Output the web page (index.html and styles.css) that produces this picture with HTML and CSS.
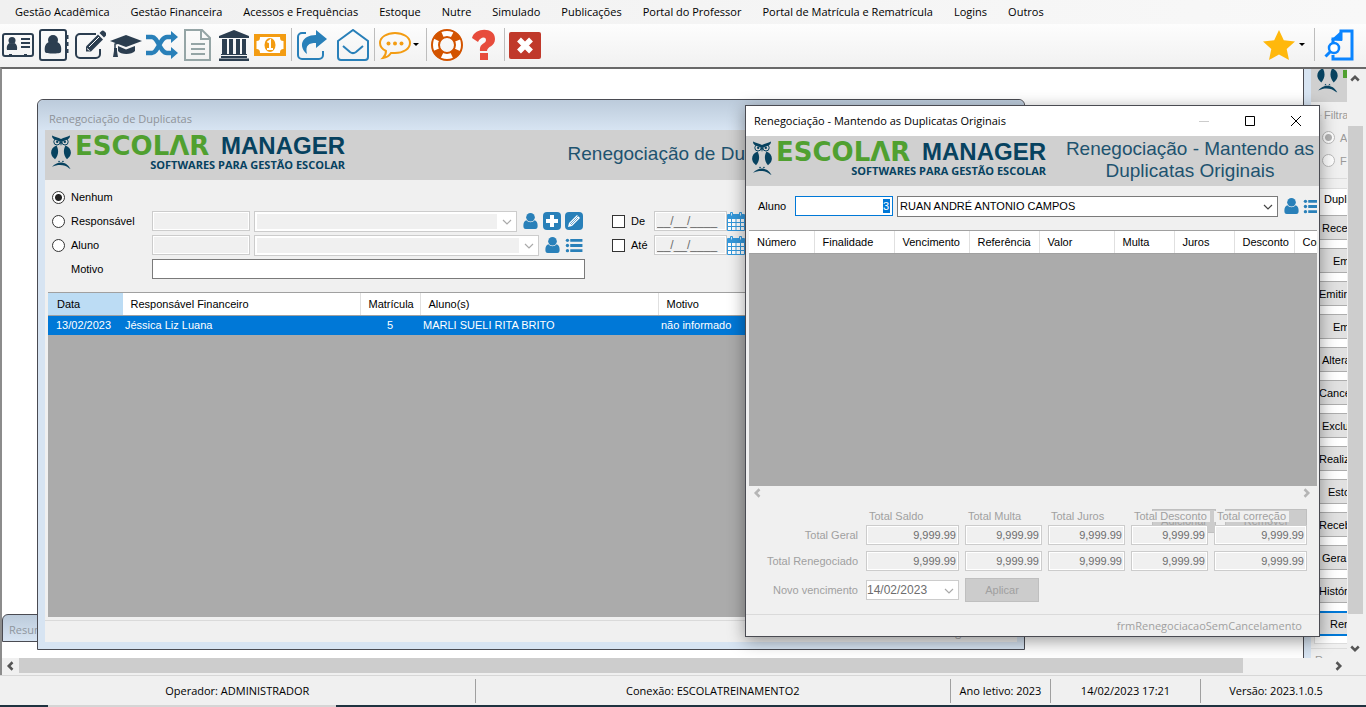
FILE: index.html
```html
<!DOCTYPE html>
<html lang="pt-BR">
<head>
<meta charset="utf-8">
<title>Escolar Manager</title>
<link rel="stylesheet" href="styles.css">
</head>
<body>
<svg class="defs" aria-hidden="true">
  <symbol id="user" viewBox="0 0 16 18"><circle cx="8" cy="5" r="4.6"/><path d="M3.6 8.2C1.3 8.8.4 11 .4 14.200c0 2 .8 3.300 2.500 3.300h10.200c1.700 0 2.500-1.300 2.500-3.300 0-3.200-.9-5.400-3.200-6C11.300 9.500 9.800 10.300 8 10.300S4.700 9.500 3.600 8.200z"/></symbol>
  <symbol id="list" viewBox="0 0 18 16"><circle cx="2" cy="2.500" r="1.800"/><circle cx="2" cy="8" r="1.800"/><circle cx="2" cy="13.500" r="1.800"/><path d="M5 1h13v3H5zM5 6.500h13v3H5zM5 12h13v3H5z"/></symbol>
  <symbol id="calendar" viewBox="0 0 18 20"><path d="M1 4h16v15H1z" fill="#fff"/><path d="M0 4a1 1 0 0 1 1-1h16a1 1 0 0 1 1 1v4H0z"/><path d="M.5 7v12.500h17V7M.5 11.500h17M.5 15.500h17M4.500 8v11M9 8v11M13.500 8v11" fill="none" stroke="currentColor"/><path d="M3.500 4V1.500h2V5h-2zM12.500 4V1.500h2V5h-2z" fill="#cfe4f4" stroke="currentColor"/></symbol>
  <symbol id="owl" viewBox="0 0 20 34"><path d="M1 0c3 2 6 1.500 9 3.500C13 1.500 16 2 19 0c0 2-.7 3-2 3.700L10 6.500 3 3.700C1.700 3 1 2 1 0zM8.800 6.500h2.400L10 10.500z"/><circle cx="6" cy="6.300" r="3.200" fill="none" stroke="currentColor" stroke-width="1"/><circle cx="14" cy="6.300" r="3.200" fill="none" stroke="currentColor" stroke-width="1"/><circle cx="6.200" cy="6.300" r="1.200"/><circle cx="13.800" cy="6.300" r="1.200"/><path d="M5.500 10C1.500 11.500-.5 15 .3 18.500c.6 2.500 2 3.500 3.700 5.200C7.700 19.500 8 14.500 5.500 10zM14.500 10c4 1.500 6 5 5.200 8.500-.6 2.500-2 3.500-3.700 5.200-3.700-4.200-4-9.200-1.500-13.700z"/><path d="M1 31.500C6 25.500 15 25 19.500 33.500L18 32.800C14 29 7 28.500 1 31.500zM7 26.500l1-1.500 1.200 1.500zM10.800 26.500 12 25l1 1.500z"/></symbol>
  <symbol id="chevron" viewBox="0 0 10 6"><path d="M1 1l4 4 4-4" fill="none" stroke="currentColor" stroke-width="1.200"/></symbol>
  <symbol id="arrow" viewBox="0 0 8 6"><path d="M1 5l3-3 3 3" fill="none" stroke="currentColor" stroke-width="2"/></symbol>
</svg>

<nav class="menubar">
  <a href="#">Gestão Acadêmica</a><a href="#">Gestão Financeira</a><a href="#">Acessos e Frequências</a><a href="#">Estoque</a><a href="#">Nutre</a><a href="#">Simulado</a><a href="#">Publicações</a><a href="#">Portal do Professor</a><a href="#">Portal de Matrícula e Rematrícula</a><a href="#">Logins</a><a href="#">Outros</a>
</nav>

<div class="toolbar">
  <button class="tool navy" aria-label="Cadastro"><svg viewBox="0 0 32 32"><rect x="1" y="5" width="30" height="22" rx="2" fill="none" stroke="currentColor" stroke-width="2"/><circle cx="10" cy="11.500" r="3.500"/><path d="M5 21c-.7-4 .7-6.500 3-7 1.300 1 2.700 1 4 0 2.300.5 3.700 3 3 7zM19 9h9v2h-9zM19 13h9v2h-9zM19 17h9v2h-9zM7 25h3v2H7zM22 25h3v2h-3z"/></svg></button>
  <button class="tool navy" aria-label="Agenda"><svg viewBox="0 0 32 32"><rect x="2" y="1" width="26" height="30" rx="2" fill="none" stroke="currentColor" stroke-width="2"/><circle cx="15" cy="11" r="5"/><path d="M7 23c-1-6 1-9 4-10 2.500 2 5.500 2 8 0 3 1 5 4 4 10-.5 2-15.500 2-16 0zM28 6h2.500v4H28zM28 13h2.500v4H28zM28 20h2.500v4H28z"/></svg></button>
  <button class="tool navy" aria-label="Editar"><svg viewBox="0 0 32 32"><path d="M22 5H6a4 4 0 0 0-4 4v16a4 4 0 0 0 4 4h16a4 4 0 0 0 4-4v-5" fill="none" stroke="currentColor" stroke-width="2"/><path d="M12 17.500 24 5.500l5 5-12 12h-5z"/><path d="m25.500 4 1.800-1.800c1-1 2.200-.8 3 0l1.500 1.500c1 1 .8 2.200 0 3L30 8.500z"/><path d="m15 18 10-10M13 19.500l2.500 2" stroke="#fff"/></svg></button>
  <button class="tool navy" aria-label="Turmas"><svg viewBox="0 0 32 32"><path d="M16 6 0 12l16 6 16-6z"/><path d="M8 17v5c2.500 4 14 4 17 0v-5l-9 3.500z"/><path d="m16 12-11 3v5" fill="none" stroke="currentColor" stroke-width="1.500"/><path d="M4 19h3v3l1 6H3l1-6z"/></svg></button>
  <button class="tool blue" aria-label="Remanejar"><svg viewBox="0 0 32 32"><path d="M0 8h6c6 0 8 16 15 16h5M0 24h6c6 0 8-16 15-16h5" fill="none" stroke="currentColor" stroke-width="4.500"/><path d="m25 2 7 6-7 6zM25 18l7 6-7 6z"/></svg></button>
  <button class="tool sage" aria-label="Documentos"><svg viewBox="0 0 32 32"><path d="M3 1h17l8 8v22H3zM19 1v9h9M9 15h14M9 20h14M9 25h14" fill="none" stroke="currentColor" stroke-width="2"/></svg></button>
  <button class="tool navy" aria-label="Banco"><svg viewBox="0 0 32 32"><path d="m16 1 15 6v2H1V7zM3 27h26v2H3zM1 29.500h30V32H1zM4 10h5v15H4zM11 10h4v15h-4zM18 10h4v15h-4zM24 10h4v15h-4zM3 25h26v1H3z"/></svg></button>
  <button class="tool orange" aria-label="Caixa"><svg viewBox="0 0 32 32"><path d="M0 5h32v22H0z"/><path d="M6 8h20c0 3 1 4 3.500 4v8c-2.500 0-3.500 1-3.500 4H6c0-3-1-4-3.500-4v-8C5 12 6 11 6 8z" fill="#fff"/><ellipse cx="16" cy="16" rx="5.500" ry="7"/><path d="m13.500 13.500 2.500-2v8M13 20h6" fill="none" stroke="#fff" stroke-width="2"/></svg></button>
  <span class="sep"></span>
  <button class="tool blue" aria-label="Exportar"><svg viewBox="0 0 32 32"><path d="M10 4H6a4 4 0 0 0-4 4v18a4 4 0 0 0 4 4h17a4 4 0 0 0 4-4v-4" fill="none" stroke="currentColor" stroke-width="2"/><path d="M20 1l11 9-11 9v-5c-7 0-11 2-9 11C2 18 5 6 20 6z"/></svg></button>
  <button class="tool blue wide" aria-label="Mensagens"><svg viewBox="0 0 32 32"><path d="M1 12 16 1l15 11v16a3 3 0 0 1-3 3H4a3 3 0 0 1-3-3zM6 17l7 6c2 1.500 4 1.500 6 0l7-6" fill="none" stroke="currentColor" stroke-width="2"/></svg></button>
  <span class="sep"></span>
  <button class="tool orange" aria-label="Conversas"><svg viewBox="0 0 32 32"><path d="M16 4c8 0 15 4 15 10s-7 10-15 10h-4c-2 3-4 4.500-8 5 2-2 3-4 3-7-4-2-6-4.500-6-8C1 8 8 4 16 4z" fill="none" stroke="currentColor" stroke-width="2"/><circle cx="9.500" cy="14.500" r="2"/><circle cx="16" cy="14.500" r="2"/><circle cx="22.500" cy="14.500" r="2"/></svg></button>
  <span class="caret"></span><span class="sep"></span>
  <button class="tool rust" aria-label="Suporte"><svg viewBox="0 0 32 32"><circle cx="16" cy="16" r="11.500" fill="none" stroke="#fff" stroke-width="7"/><circle cx="16" cy="16" r="11.500" fill="none" stroke="currentColor" stroke-width="8" stroke-dasharray="8.060 10" stroke-dashoffset="-5"/><circle cx="16" cy="16" r="15" fill="none" stroke="currentColor" stroke-width="2"/><circle cx="16" cy="16" r="8" fill="none" stroke="currentColor" stroke-width="2"/></svg></button>
  <button class="tool red" aria-label="Ajuda"><svg viewBox="0 0 32 32"><path d="M5 9c3-11 23-11 23 1 0 8-8 7-8 12h-7c-1-8 6-7 6-11 0-4-6-3-8 2zM13 24h8v7h-8z"/></svg></button>
  <span class="sep"></span>
  <button class="tool crimson" aria-label="Sair"><svg viewBox="0 0 32 32"><rect y="3" width="32" height="27" rx="2"/><path d="m10 10.500 12 12m0-12-12 12" stroke="#fff" stroke-width="5.500"/></svg></button>
  <span class="spacer"></span>
  <button class="tool gold" aria-label="Favoritos"><svg viewBox="0 0 32 32"><path d="m16 1 4.800 10.200L32 12.500l-8.300 7.600L26 31l-10-5.500L6 31l2.300-10.900L0 12.500l11.200-1.300z"/></svg></button>
  <span class="caret last"></span><span class="sep"></span>
  <button class="tool azure wide" aria-label="Pesquisar documento"><svg viewBox="0 0 32 32"><path d="M9 15V10h8V2h11v28H9v-4" fill="none" stroke="currentColor" stroke-width="3"/><path d="m7 11 11-10v11z"/><circle cx="10" cy="19" r="5" fill="#fff" stroke="currentColor" stroke-width="2.500"/><path d="m6.500 22.500-5 5" stroke="currentColor" stroke-width="3"/></svg></button>
</div>

<main class="workspace">
  <div class="desktop">
    <section class="window side-window">
      <div class="side-body">
        <div class="side-banner"><svg class="owl"><use href="#owl"/></svg><span class="green-bit"></span></div>
        <fieldset class="filter"><legend>Filtra</legend>
          <label><input type="radio" name="filtro" checked disabled>A</label>
          <label><input type="radio" name="filtro" disabled>F</label>
        </fieldset>
        <div class="side-panel">
          <h3>Dupli</h3>
          <button class="near">Receb</button><button class="far">Em</button><button class="edge">Emitir F</button><button class="far">Em</button><button class="near">Altera</button><button class="edge">Cance</button><button class="near">Exclu</button><button class="edge">Realiz</button><button class="mid">Esto</button><button class="edge">Receb</button><button class="near">Gera</button><button class="edge">Histór</button><button class="mid active">Ren</button>
        </div>
        <div class="side-foot">Resumo</div>
      </div>
    </section>

    <section class="window resumo-window">Resumo</section>

    <section class="window main-window">
      <h2 class="titlebar">Renegociação de Duplicatas</h2>
      <div class="client">
        <header class="banner">
          <div class="logo"><svg class="owl"><use href="#owl"/></svg><div class="logo-text"><div class="brand"><span class="brand-green" aria-label="ESCOLAR">ESCOLΛR</span><span>MANAGER</span></div><div class="tagline">SOFTWARES PARA GESTÃO ESCOLAR</div></div></div>
          <h1>Renegociação de Duplicatas</h1>
        </header>
        <form class="search">
          <div class="row"><label class="pick"><input type="radio" name="tipo" checked>Nenhum</label></div>
          <div class="row"><label class="pick"><input type="radio" name="tipo">Responsável</label><input class="field code" disabled aria-label="Código do responsável"><span class="combo off payer"><select disabled aria-label="Responsável"><option></option></select><svg><use href="#chevron"/></svg></span>
            <button type="button" class="icon" aria-label="Buscar"><svg class="person"><use href="#user"/></svg></button>
            <button type="button" class="icon tile" aria-label="Adicionar"><svg viewBox="0 0 18 18"><path d="M9 3v12M3 9h12" stroke="#fff" stroke-width="4"/></svg></button>
            <button type="button" class="icon tile" aria-label="Editar"><svg viewBox="0 0 18 18"><path d="m3 15 1-4 8-8 3 3-8 8z" fill="#fff"/><path d="m5 12 8-8M6 13l7-7" stroke="#2980b9" stroke-width=".7"/></svg></button>
            <label class="check"><input type="checkbox">De</label><input class="field date" value="__/__/____" disabled aria-label="Data inicial"><svg class="cal"><use href="#calendar"/></svg></div>
          <div class="row"><label class="pick"><input type="radio" name="tipo">Aluno</label><input class="field code" disabled aria-label="Código do aluno"><span class="combo off student"><select disabled aria-label="Aluno"><option></option></select><svg><use href="#chevron"/></svg></span>
            <button type="button" class="icon" aria-label="Buscar"><svg class="person"><use href="#user"/></svg></button>
            <button type="button" class="icon" aria-label="Lista"><svg class="lines"><use href="#list"/></svg></button>
            <label class="check"><input type="checkbox">Até</label><input class="field date" value="__/__/____" disabled aria-label="Data final"><svg class="cal"><use href="#calendar"/></svg></div>
          <div class="row"><label class="pick motive" for="motivo">Motivo</label><input class="field on reason" id="motivo"></div>
        </form>
        <div class="grid-box">
          <table class="debts">
            <colgroup><col class="c-date"><col class="c-payer"><col class="c-id"><col class="c-student"><col></colgroup>
            <thead><tr><th class="sorted">Data</th><th>Responsável Financeiro</th><th>Matrícula</th><th>Aluno(s)</th><th>Motivo</th></tr></thead>
            <tbody><tr><td class="day">13/02/2023</td><td>Jéssica Liz Luana</td><td class="mid-cell">5</td><td>MARLI SUELI RITA BRITO</td><td>não informado</td></tr></tbody>
          </table>
        </div>
        <footer class="form-name">frmRenegociacao</footer>
      </div>
    </section>

    <section class="window modal" role="dialog" aria-label="Renegociação">
      <div class="modal-title"><h2>Renegociação - Mantendo as Duplicatas Originais</h2>
        <button class="min" aria-label="Minimizar"><svg viewBox="0 0 12 12"><path d="M1 6.500h10" stroke="currentColor"/></svg></button><button aria-label="Maximizar"><svg viewBox="0 0 12 12"><path d="M1.500 1.500h9v9h-9z" fill="none" stroke="currentColor"/></svg></button><button aria-label="Fechar"><svg viewBox="0 0 12 12"><path d="m1 1 10 10m0-10L1 11" stroke="currentColor"/></svg></button></div>
      <header class="banner">
        <div class="logo"><svg class="owl"><use href="#owl"/></svg><div class="logo-text"><div class="brand"><span class="brand-green" aria-label="ESCOLAR">ESCOLΛR</span><span>MANAGER</span></div><div class="tagline">SOFTWARES PARA GESTÃO ESCOLAR</div></div></div>
        <h1>Renegociação - Mantendo as Duplicatas Originais</h1>
      </header>
      <div class="modal-pick"><label for="cod">Aluno</label><span class="field focus code"><input id="cod" value="3"></span><span class="combo pupil"><select aria-label="Nome do aluno"><option>RUAN ANDRÉ ANTONIO CAMPOS</option></select><svg><use href="#chevron"/></svg></span>
        <button class="icon" aria-label="Buscar"><svg class="person"><use href="#user"/></svg></button><button class="icon" aria-label="Lista"><svg class="lines"><use href="#list"/></svg></button></div>
      <div class="grid-box modal-grid">
        <table class="titles">
          <colgroup><col class="w65"><col class="w80"><col class="w75"><col class="w70"><col class="w75"><col class="w60"><col class="w60"><col class="w60"><col class="w70"></colgroup>
          <thead><tr><th>Número</th><th>Finalidade</th><th>Vencimento</th><th>Referência</th><th>Valor</th><th>Multa</th><th>Juros</th><th>Desconto</th><th>Correção</th></tr></thead>
        </table>
      </div>
      <div class="mini-scroll"><svg class="left"><use href="#arrow"/></svg><svg class="right"><use href="#arrow"/></svg></div>
      <div class="totals">
        <button class="ghost add" disabled>Adicionar</button><button class="ghost remove" disabled>Remover</button>
        <span></span><b>Total Saldo</b><b>Total Multa</b><b>Total Juros</b><b>Total Desconto</b><b>Total correção</b>
        <span class="side">Total Geral</span><input class="field" value="9,999.99" disabled aria-label="Saldo geral"><input class="field" value="9,999.99" disabled aria-label="Multa geral"><input class="field" value="9,999.99" disabled aria-label="Juros geral"><input class="field" value="9,999.99" disabled aria-label="Desconto geral"><input class="field" value="9,999.99" disabled aria-label="Correção geral">
        <span class="side">Total Renegociado</span><input class="field" value="9,999.99" disabled aria-label="Saldo renegociado"><input class="field" value="9,999.99" disabled aria-label="Multa renegociada"><input class="field" value="9,999.99" disabled aria-label="Juros renegociados"><input class="field" value="9,999.99" disabled aria-label="Desconto renegociado"><input class="field" value="9,999.99" disabled aria-label="Correção renegociada">
        <label class="side due" for="venc">Novo vencimento</label><span class="combo off-light due"><select id="venc" disabled><option>14/02/2023</option></select><svg><use href="#chevron"/></svg></span><button class="apply due" disabled>Aplicar</button>
      </div>
      <footer class="form-name">frmRenegociacaoSemCancelamento</footer>
    </section>
  </div>
  <div class="vscroll"><svg><use href="#arrow"/></svg><div class="vtrack"><div class="vthumb"></div></div><svg class="down"><use href="#arrow"/></svg></div>
  <div class="hscroll"><svg class="left"><use href="#arrow"/></svg><div class="htrack"><div class="hthumb"></div></div><svg class="right"><use href="#arrow"/></svg></div>
</main>

<footer class="statusbar"><span class="grow">Operador: ADMINISTRADOR</span><span class="grow">Conexão: ESCOLATREINAMENTO2</span><span class="year">Ano letivo: 2023</span><span class="clock">14/02/2023 17:21</span><span class="version">Versão: 2023.1.0.5</span></footer>
<div class="taskbar"><span></span></div>
</body>
</html>
```
FILE: styles.css
```css
* { box-sizing: border-box; }
body { margin: 0; height: 100vh; display: flex; flex-direction: column; overflow: hidden; background: #f0f0f0; color: #000; font: 11px/14px "Liberation Sans", Arial, sans-serif; }
button, input, select { font: inherit; color: inherit; margin: 0; padding: 0; border: 0; background: none; }
h1, h2, h3 { margin: 0; font-weight: 400; }
svg { display: block; fill: currentColor; }
.defs { position: absolute; width: 0; height: 0; }

.menubar { display: flex; gap: 21px; height: 24px; padding: 0 15px; background: linear-gradient(90deg, #f0f0f0, #f8f8f8); font: 11px/24px "Open Sans", sans-serif; white-space: nowrap; }
.menubar a { color: #000; text-decoration: none; }
.toolbar { display: flex; align-items: center; gap: 4px; height: 43px; padding: 0 10px 2px 2px; background: linear-gradient(#fdfdfd, #f1f1f1); }
.tool { width: 32px; height: 32px; }
.tool svg { width: 32px; height: 32px; }
.wide { margin-left: 5px; }
.navy { color: #2c3e50; }
.blue { color: #2980b9; }
.sage { color: #95a5a6; }
.orange { color: #f39c12; }
.rust { color: #d35400; }
.red { color: #e74c3c; }
.crimson { color: #c0392b; }
.gold { color: #ffb80c; }
.azure { color: #0a84ff; }
.sep { width: 1px; height: 33px; margin-left: 1px; background: #bdbdbd; }
.caret { width: 6px; border: 3px solid transparent; border-top-color: #000; border-bottom: 0; margin: 0 2px 0 -2px; }
.last { margin: 0 4px 0 0; }
.spacer { flex: 1; }

.workspace { flex: 1; min-height: 0; display: grid; grid-template: minmax(0, 1fr) 17px / minmax(0, 1fr) 16px; padding-right: 3px; border-top: 2px solid #696969; border-left: 2px solid #8c8c8c; }
.desktop { position: relative; overflow: hidden; background: #fff; }
.window { position: absolute; border: 1px solid #4a4b52; }
.vscroll { display: flex; flex-direction: column; align-items: center; padding: 5px 0; color: #555; background: #f0f0f0; }
.vscroll svg, .hscroll svg { width: 10px; height: 8px; }
.vtrack { flex: 1; width: 15px; padding: 44px 0 31px; }
.vthumb { height: 100%; background: #cdcdcd; }
.down { transform: rotate(180deg); }
.left { transform: rotate(-90deg); }
.right { transform: rotate(90deg); }
.hscroll { grid-column: 1 / -1; display: flex; align-items: center; gap: 4px; padding: 0 19px 2px 3px; color: #555; background: #f0f0f0; }
.htrack { flex: 1; height: 15px; padding-right: 87px; }
.hthumb { height: 100%; background: #cdcdcd; }

.side-window { left: 1301px; top: -8px; bottom: -8px; right: -200px; padding-left: 7px; background: #d7e4f2; }
.side-body { height: 100%; background: #f0f0f0; padding-top: 7px; }
.side-banner { display: flex; gap: 5px; align-items: end; height: 33px; padding: 0 6px; background: #d0d0d0; color: #07425f; overflow: hidden; }
.side-banner .owl { flex: none; width: 21px; height: 35px; margin-bottom: 9px; }
.green-bit { width: 16px; height: 8px; margin-bottom: 24px; background: #50a030; }
.filter { margin: 6px 0 0 3px; padding: 4px 2px 0 7px; border: 1px solid #dcdcdc; height: 71px; color: #999; }
.filter legend { padding: 0 2px; }
.filter label { display: flex; align-items: center; gap: 5px; height: 23px; }
.side-panel { display: flex; flex-direction: column; gap: 8px; margin: 9px 0 0 3px; padding-bottom: 7px; border: 1px solid #dcdcdc; background: #fff; }
.side-panel h3 { height: 18px; padding: 2px 0 0 9px; font-size: 11px; line-height: 16px; }
.side-panel button { height: 25px; text-align: left; background: #e1e1e1; border: 1px solid #adadad; border-width: 1px 0; white-space: nowrap; }
.side-panel .edge { padding-left: 4px; }
.side-panel .near { padding-left: 7px; }
.side-panel .mid { padding-left: 13px; }
.side-panel .far { padding-left: 18px; }
.side-panel .active { border: 2px solid #0078d7; }
.side-foot { margin-top: 4px; padding: 4px; border-top: 1px solid #dcdcdc; color: #999; }

.resumo-window { left: 0; top: 545px; width: 240px; height: 28px; padding: 0 6px; border-radius: 6px 6px 0 0; background: linear-gradient(#bccbdb, #d7e4f2); color: #8f969e; font: 11px/30px "Open Sans", sans-serif; }
.main-window { left: 35px; top: 30px; width: 988px; height: 551px; display: flex; flex-direction: column; padding: 0 7px 7px; border-radius: 6px 6px 0 0; background: #d7e4f2; }
.titlebar { height: 30px; margin: 0 -7px; padding: 4px 11px 0; border-radius: 6px 6px 0 0; background: linear-gradient(#bccbdb, #d7e4f2); color: #8f9399; font: 11px/30px "Open Sans", sans-serif; }
.client { flex: 1; min-height: 0; display: flex; flex-direction: column; background: #f0f0f0; }
.banner { display: flex; height: 50px; padding: 0 0 0 6px; background: #d0d0d0; color: #07425f; }
.banner h1 { flex: 1; align-self: center; padding: 0 0 2px 15px; text-align: center; color: #1e536f; font-size: 19px; line-height: 22px; }
.logo { display: flex; flex: none; gap: 4px; padding-top: 5px; }
.logo .owl { width: 20px; height: 35px; }
.logo-text { display: flex; flex-direction: column; align-items: flex-end; width: 270px; }
.brand { display: flex; justify-content: space-between; width: 100%; font: 700 24px/22px "Liberation Sans", sans-serif; }
.brand-green { color: #50a030; font: 700 26px/22px "DejaVu Sans", sans-serif; }
.tagline { font: 700 11px/15px "Open Sans", sans-serif; white-space: nowrap; }

.search { padding: 5px 6px 0 7px; }
.row { display: flex; align-items: center; height: 24px; }
.pick { display: flex; align-items: center; gap: 6px; width: 100px; }
.motive { padding-left: 19px; }
input[type="radio"] { appearance: none; width: 13px; height: 13px; border: 1px solid #333; border-radius: 50%; background: #fff; }
input[type="radio"]:checked { background: radial-gradient(circle, #222 3px, #fff 4px); }
input[type="radio"]:disabled { border-color: #bbb; }
input[type="radio"]:checked:disabled { background: radial-gradient(circle, #b5b5b5 3px, #fff 4px); }
input[type="checkbox"] { appearance: none; width: 13px; height: 13px; border: 1px solid #333; background: #fff; }
.field { flex: none; height: 20px; border: 1px solid #ccc; outline: 1px solid #fff; outline-offset: -2px; background: #f0f0f0; color: #6d6d6d; font-size: 11px; }
.field.on { background: #fff; border-color: #7a7a7a; }
.code { width: 98px; margin-right: 4px; }
.reason { width: 433px; }
.combo { position: relative; display: block; height: 21px; border: 1px solid #7a7a7a; background: #fff; color: #000; }
.combo select { appearance: none; display: block; width: 100%; height: 100%; padding: 0 2px; opacity: 1; }
.combo svg { position: absolute; right: 4px; top: 7px; width: 10px; height: 6px; color: #444; }
.off { border-color: #ccc; padding: 2px 19px 2px 2px; }
.off select { background: #f0f0f0; }
.off svg, .off-light svg { color: #aaa; }
.payer { width: 263px; margin-right: 4px; }
.student { width: 285px; margin-right: 4px; }
.icon { display: grid; place-items: center; flex: none; width: 18px; height: 18px; margin-right: 4px; color: #2980b9; }
.person { width: 15px; height: 18px; }
.lines { width: 18px; height: 15px; }
.tile { border-radius: 4px; background: #2980b9; }
.tile svg { width: 18px; height: 18px; }
.check { display: flex; align-items: center; gap: 6px; width: 42px; margin-left: 25px; }
.search .date { width: 73px; padding-left: 2px; font-size: 12px; }
.cal { width: 18px; height: 20px; color: #3498db; }

.grid-box { flex: 1; min-height: 0; margin: 11px 3px 0; border-top: 1px solid #a0a0a0; background: #ababab; overflow: hidden; }
table { table-layout: fixed; border-collapse: collapse; width: 100%; white-space: nowrap; }
th { height: 22px; padding: 0 7px 0 8px; text-align: left; font-weight: 400; background: #fff; border-right: 1px solid #e0e0e0; border-bottom: 1px solid #a0a0a0; }
td { height: 20px; padding: 0 3px; background: #0078d7; color: #fff; }
.sorted { padding-left: 9px; background: #bcdcf4; border-right-color: #bcdcf4; }
.day { padding-left: 8px; }
.mid-cell { text-align: center; }
.c-date { width: 74px; }
.c-payer { width: 238px; }
.c-id { width: 60px; }
.c-student { width: 238px; }
.form-name { height: 22px; margin-top: 3px; padding-right: 17px; border-top: 1px solid #dadada; color: #a0a0a0; text-align: right; font: 11px/22px "Open Sans", sans-serif; }

.modal { left: 743px; top: 36px; width: 575px; height: 532px; display: flex; flex-direction: column; background: #f0f0f0; box-shadow: 0 4px 16px rgba(0, 0, 0, .4); }
.modal-title { display: flex; height: 30px; background: #fff; }
.modal-title h2 { flex: 1; padding-left: 8px; font: 11px/30px "Open Sans", sans-serif; }
.modal-title button { display: grid; place-items: center; width: 46px; }
.modal-title svg { width: 12px; height: 12px; }
.min { color: #ccc; }
.modal-pick { display: flex; align-items: center; height: 44px; margin-right: 2px; padding: 0 0 4px 12px; overflow: hidden; }
.modal-pick label { flex: none; width: 37px; }
.focus { display: flex; justify-content: flex-end; align-items: center; border-color: #0078d7; background: #fff; padding-right: 2px; }
.focus input { width: 7px; height: 14px; background: #0078d7; color: #fff; }
.pupil { flex: none; width: 381px; margin-right: 4px; }
.modal-pick .icon { margin-right: 3px; }
.modal-grid { flex: none; height: 256px; margin: 0 2px 0 3px; }
.titles { width: 615px; }
.w60 { width: 60px; }
.w65 { width: 65px; }
.w70 { width: 70px; }
.w75 { width: 75px; }
.w80 { width: 80px; }
.mini-scroll { display: flex; justify-content: space-between; padding: 3px 7px 0 6px; height: 16px; color: #b5b5b5; }
.mini-scroll svg { width: 10px; height: 8px; }
.totals { position: relative; display: grid; grid-template-columns: 100px 93px 77px 77px 77px 93px; grid-template-rows: 15px 20px 20px 24px; column-gap: 6px; row-gap: 6px; align-items: center; margin: 2px 10px 0 14px; color: #a0a0a0; }
.totals b { z-index: 1; justify-self: start; align-self: end; margin-bottom: -3px; padding: 0 3px; font-weight: 400; line-height: 11px; background: #f0f0f0; white-space: nowrap; }
.totals .field { z-index: 1; width: 100%; padding-right: 2px; text-align: right; }
.side { justify-self: end; margin-right: 2px; white-space: nowrap; }
.ghost { position: absolute; top: 5px; height: 24px; background: #ccc; border: 1px solid #bfbfbf; color: #a0a0a0; }
.add { left: 392px; width: 64px; }
.remove { left: 465px; width: 82px; }
.off-light { border-color: #ccc; height: 20px; color: #6d6d6d; font-size: 12px; }
.off-light select { padding: 0; }
.apply { width: 74px; height: 24px; background: #ccc; border: 1px solid #bfbfbf; color: #a0a0a0; }
.totals .due { margin-top: 2px; }
.modal > .form-name { margin-top: auto; }

.statusbar { display: flex; align-items: center; height: 30px; border-top: 1px solid #d7d7d7; font: 11px/24px "Open Sans", sans-serif; white-space: nowrap; text-align: center; }
.statusbar span { border-right: 1px solid #a0a0a0; }
.grow { flex: 1; }
.year { width: 100px; }
.clock { width: 150px; }
.statusbar .version { width: 165px; padding-right: 15px; border-right: 0; }
.taskbar { display: flex; height: 2px; background: #1f3340; }
.taskbar span { width: 288px; margin-left: 48px; background: #d5d5d5; }
```
